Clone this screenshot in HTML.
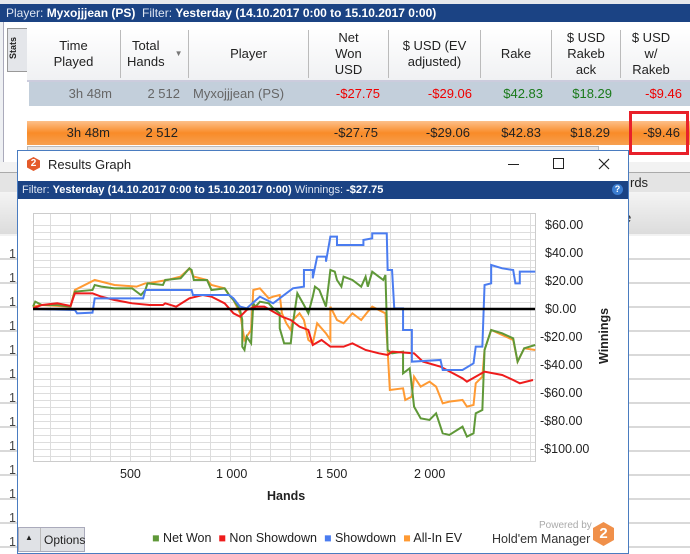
<!DOCTYPE html><html><head><style>
body{margin:0;width:690px;height:553px;overflow:hidden;position:relative;background:#fff;font-family:"Liberation Sans",sans-serif;font-size:12px;color:#222}
.a{position:absolute}
.th{position:absolute;top:28px;height:52px;display:flex;align-items:center;justify-content:center;text-align:center;line-height:16px;font-size:13px;color:#222}
.c{position:absolute;font-size:13px;text-align:right}
</style></head><body>
<div class="a" style="left:0;top:0;width:690px;height:4px;background:#e6e8ec"></div>
<div class="a" style="left:0;top:4px;width:690px;height:18px;background:#1b4384;color:#dfe6f2;font-size:12px;line-height:18px;padding-left:6px">Player: <b style="color:#fff">Myxojjjean (PS)</b>&nbsp; Filter: <b style="color:#fff">Yesterday (14.10.2017 0:00 to 15.10.2017 0:00)</b></div>
<div class="a" style="left:0;top:22px;width:690px;height:140px;background:#eef0f3"></div>
<div class="a" style="left:3px;top:22px;width:687px;height:140px;background:#fff;border-left:1px solid #aab"></div>
<div class="a" style="left:7px;top:28px;width:19px;height:42px;background:#e4e6ea;border:1px solid #999"><div style="transform:rotate(-90deg);position:absolute;left:-6px;top:14px;font-size:9px;font-weight:bold">Stats</div></div>
<div class="a" style="left:27px;top:28px;width:663px;height:52px;background:linear-gradient(#fff,#f0f1f3)"></div>
<div class="th" style="left:27px;width:93px">Time<br>Played</div>
<div class="th" style="left:121px;width:67px;justify-content:flex-start;padding-left:6px">Total<br>Hands<span style="font-size:8px;color:#777;margin-left:10px">▼</span></div>
<div class="th" style="left:189px;width:119px">Player</div>
<div class="th" style="left:309px;width:79px">Net<br>Won<br>USD</div>
<div class="th" style="left:389px;width:91px">$ USD (EV<br>adjusted)</div>
<div class="th" style="left:481px;width:70px">Rake</div>
<div class="th" style="left:552px;width:68px">$ USD<br>Rakeb<br>ack</div>
<div class="th" style="left:621px;width:60px">$ USD<br>w/<br>Rakeb</div>
<div class="a" style="left:120px;top:30px;width:1px;height:48px;background:#bbb"></div>
<div class="a" style="left:188px;top:30px;width:1px;height:48px;background:#bbb"></div>
<div class="a" style="left:308px;top:30px;width:1px;height:48px;background:#bbb"></div>
<div class="a" style="left:388px;top:30px;width:1px;height:48px;background:#bbb"></div>
<div class="a" style="left:480px;top:30px;width:1px;height:48px;background:#bbb"></div>
<div class="a" style="left:551px;top:30px;width:1px;height:48px;background:#bbb"></div>
<div class="a" style="left:620px;top:30px;width:1px;height:48px;background:#bbb"></div>
<div class="a" style="left:27px;top:80px;width:663px;height:2px;background:#ccd"></div>
<div class="a" style="left:29px;top:82px;width:661px;height:24px;background:#c3cfdb"></div>
<div class="c" style="left:40px;top:86px;width:72px;color:#666">3h 48m</div>
<div class="c" style="left:120px;top:86px;width:60px;color:#666">2 512</div>
<div class="c" style="left:193px;top:86px;color:#666">Myxojjjean (PS)</div>
<div class="c" style="left:300px;top:86px;width:80px;color:#e00">-$27.75</div>
<div class="c" style="left:390px;top:86px;width:82px;color:#e00">-$29.06</div>
<div class="c" style="left:480px;top:86px;width:63px;color:#1a7a1a">$42.83</div>
<div class="c" style="left:550px;top:86px;width:62px;color:#1a7a1a">$18.29</div>
<div class="c" style="left:620px;top:86px;width:62px;color:#e00">-$9.46</div>
<div class="a" style="left:27px;top:121px;width:663px;height:24px;background:linear-gradient(#fdc08a,#f98b28 50%,#f7a050)"></div>
<div class="c" style="left:40px;top:125px;width:70px">3h 48m</div>
<div class="c" style="left:120px;top:125px;width:58px">2 512</div>
<div class="c" style="left:300px;top:125px;width:78px">-$27.75</div>
<div class="c" style="left:390px;top:125px;width:80px">-$29.06</div>
<div class="c" style="left:480px;top:125px;width:61px">$42.83</div>
<div class="c" style="left:550px;top:125px;width:60px">$18.29</div>
<div class="c" style="left:620px;top:125px;width:60px">-$9.46</div>
<div class="a" style="left:629px;top:111px;width:54px;height:38px;border:3px solid #e8202a"></div>
<div class="a" style="left:27px;top:146px;width:570px;height:9px;background:#e8e8e8;border:1px solid #bbb"></div>
<div class="a" style="left:0;top:162px;width:690px;height:391px;background:#f2f2f2"></div>
<div class="a" style="left:0;top:172px;width:690px;height:20px;background:#e4e4e4;border-top:1px solid #aaa"></div>
<div class="a" style="left:630px;top:175px;font-size:13px">rds</div>
<div class="a" style="left:0;top:192px;width:690px;height:42px;background:linear-gradient(#f4f4f4,#dcdcdc)"></div>
<div class="a" style="left:624px;top:210px;font-size:13px">e</div>
<div class="a" style="left:0;top:236px;width:690px;height:317px;background:repeating-linear-gradient(#fff 0,#fff 22px,#d9d9d9 22px,#d9d9d9 24px)"></div>
<div class="a" style="left:9px;top:242px;font-size:12.5px;line-height:24px;color:#444">1<br>1<br>1<br>1<br>1<br>1<br>1<br>1<br>1<br>1<br>1<br>1<br>1</div>
<!-- graph window -->
<div class="a" style="left:17px;top:150px;width:610px;height:402px;background:#fff;border:1px solid #4a7cc0"></div>
<div class="a" style="left:27px;top:157px;width:13px;height:14px;background:#e45a2a;clip-path:polygon(50% 0,100% 25%,100% 75%,50% 100%,0 75%,0 25%);color:#fff;font-size:10px;font-weight:bold;text-align:center;line-height:14px">2</div>
<div class="a" style="left:48px;top:157px;font-size:13px">Results Graph</div>
<div class="a" style="left:508px;top:164px;width:11px;height:1px;background:#222"></div>
<div class="a" style="left:553px;top:158px;width:9px;height:9px;border:1px solid #222"></div>
<svg class="a" style="left:598px;top:158px" width="12" height="12"><path d="M1 1L11 11M11 1L1 11" stroke="#222" stroke-width="1.2"/></svg>
<div class="a" style="left:18px;top:181px;width:610px;height:18px;background:#1b4384;color:#dfe6f2;font-size:11px;line-height:18px;padding-left:4px;box-sizing:border-box">Filter: <b style="color:#fff">Yesterday (14.10.2017 0:00 to 15.10.2017 0:00)</b> Winnings: <b style="color:#fff">-$27.75</b></div>
<div class="a" style="left:612px;top:184px;width:11px;height:11px;border-radius:50%;background:#3a7cd0;color:#fff;font-size:9px;font-weight:bold;text-align:center;line-height:11px">?</div>
<svg class="a" style="left:0;top:0" width="690" height="553">
<g stroke="#ddd" stroke-width="1" id="grid"></g>
<rect x="33.5" y="213.5" width="502" height="248" fill="none" stroke="#ccc"/>
<g transform="translate(0,180) scale(0.4405,0.3333)" fill="none" stroke-width="2" vector-effect="non-scaling-stroke">
<polyline vector-effect="non-scaling-stroke" stroke="#ff9a33" points="75,380 95,375 160,380 170,330 215,300 260,315 310,320 330,310 335,310 380,300 410,290 430,265 440,290 470,300 480,315 510,325 520,345 530,360 545,400 555,480 570,450 575,330 590,325 600,340 610,355 620,350 635,345 640,400 650,430 660,450 665,420 680,400 690,420 700,480 710,490 720,430 740,460 750,480 750,380 765,420 780,430 800,400 820,420 835,395 845,380 860,390 875,400 880,510 885,630 915,625 920,660 935,650 940,590 955,620 975,605 990,620 1005,670 1020,665 1050,660 1060,680 1075,675 1080,610 1095,590 1100,510 1115,450 1140,465 1165,480 1175,545 1190,505 1215,510"/>
<polyline vector-effect="non-scaling-stroke" stroke="#5f9838" points="75,380 80,365 95,375 130,375 160,380 170,335 210,330 215,315 230,320 260,325 300,325 320,345 330,330 335,310 370,315 375,300 410,295 430,265 435,270 440,300 470,300 480,330 510,325 520,345 530,360 545,390 550,420 550,500 555,510 560,470 570,490 575,370 580,380 590,365 610,370 620,385 635,400 635,445 645,490 660,490 665,430 675,340 690,375 700,400 710,350 715,320 725,330 740,380 750,270 760,275 765,300 775,320 780,290 800,300 820,320 830,290 835,320 845,275 860,290 870,300 875,285 880,510 890,520 915,515 915,580 930,565 935,620 940,680 955,715 975,720 990,700 1005,760 1020,765 1050,740 1060,770 1075,760 1080,700 1095,690 1100,510 1115,450 1140,460 1165,475 1175,545 1190,505 1215,495"/>
<polyline vector-effect="non-scaling-stroke" stroke="#ee1c1c" points="75,385 95,375 130,370 160,378 170,340 210,340 230,350 260,360 300,370 340,375 370,375 375,370 400,380 430,355 460,345 480,350 510,370 520,385 530,400 545,410 560,390 580,380 600,380 620,395 640,410 660,420 680,440 700,450 710,495 730,480 750,500 780,500 800,490 830,510 860,520 880,525 890,515 940,520 960,545 1000,560 1050,595 1060,605 1100,575 1140,585 1165,600 1180,610 1210,600"/>
<polyline vector-effect="non-scaling-stroke" stroke="#4a7cf0" points="75,387 170,390 175,400 210,398 215,355 325,355 330,330 435,330 438,345 520,345 530,355 545,380 560,385 590,350 620,370 665,325 690,320 690,270 710,270 710,295 720,230 740,230 740,245 750,170 765,170 765,195 825,195 825,180 845,175 845,160 878,160 880,270 890,270 895,385 915,385 915,450 935,450 935,545 1000,540 1005,570 1050,570 1075,550 1080,500 1095,500 1100,315 1115,310 1115,255 1140,265 1165,270 1170,310 1180,310 1180,275 1215,275"/>
</g>
<line x1="33" y1="309" x2="535" y2="309" stroke="#000" stroke-width="2.5"/>
<g font-size="12.5" fill="#222" font-family="Liberation Sans">
<text x="545" y="229">$60.00</text><text x="545" y="257">$40.00</text><text x="545" y="285">$20.00</text><text x="545" y="313">$0.00</text><text x="540" y="341">-$20.00</text><text x="540" y="369">-$40.00</text><text x="540" y="397">-$60.00</text><text x="540" y="425">-$80.00</text><text x="540" y="453">-$100.00</text>
<text x="120" y="478">500</text><text x="216" y="478">1 000</text><text x="316" y="478">1 500</text><text x="414" y="478">2 000</text>
<text x="267" y="500" font-weight="bold">Hands</text>
<text transform="translate(608,364) rotate(-90)" font-weight="bold">Winnings</text>
</g>
</svg>
<script>
var g=document.getElementById('grid'),s='';
for(var y=225;y<=462;y+=7)s+='<line x1="33" x2="535" y1="'+y+'.5" y2="'+y+'.5"/>';
for(var x=50;x<535;x+=20)s+='<line y1="213" y2="462" x1="'+x+'.5" x2="'+x+'.5"/>';
g.innerHTML=s;
</script>
<div class="a" style="left:18px;top:527px;width:67px;height:25px;background:#e0e2e6;border:1px solid #aab;box-sizing:border-box"><span style="position:absolute;left:6px;top:5px;font-size:8px">▲</span><span style="position:absolute;left:21px;top:0;height:23px;border-left:1px solid #bbb;padding-left:3px;line-height:24px;font-size:12px">Options</span></div>
<div class="a" style="left:152px;top:531px;font-size:12.5px;white-space:nowrap"><span style="color:#5f9838">■</span> Net Won&nbsp; <span style="color:#ee1c1c">■</span> Non Showdown&nbsp; <span style="color:#4a7cf0">■</span> Showdown&nbsp; <span style="color:#ff9a33">■</span> All-In EV</div>
<div class="a" style="left:539px;top:520px;font-size:10px;color:#aaa">Powered by</div>
<div class="a" style="left:492px;top:532px;font-size:12.5px;color:#333">Hold'em Manager</div>
<div class="a" style="left:593px;top:522px;width:21px;height:24px;background:#f0904a;clip-path:polygon(50% 0,100% 25%,100% 75%,50% 100%,0 75%,0 25%);color:#fff;font-size:15px;font-weight:bold;text-align:center;line-height:24px">2</div>
</body></html>
